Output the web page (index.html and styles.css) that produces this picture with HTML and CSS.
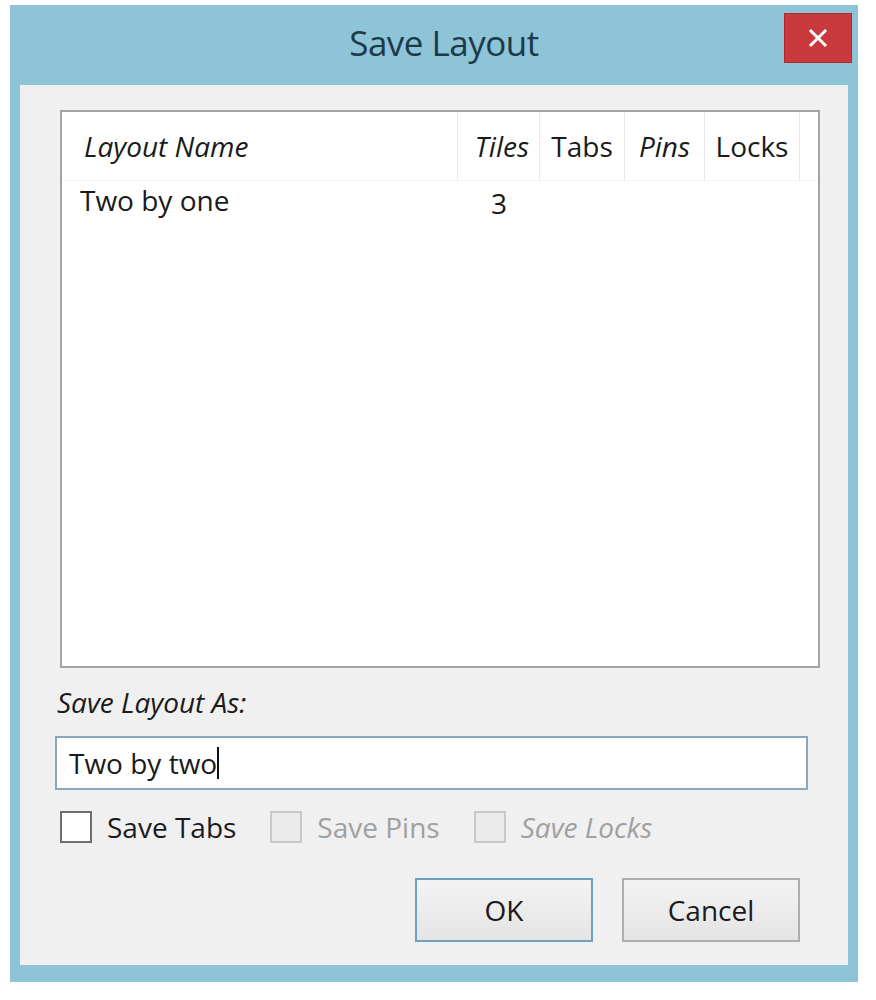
FILE: index.html
```html
<!DOCTYPE html>
<html lang="en">
<head>
    <meta charset="UTF-8">
    <meta name="viewport" content="width=device-width, initial-scale=1.0">
    <link rel="stylesheet" href="styles.css">
    <title>Save Layout</title>
</head>
<body>

    <div class="window">
        <div class="titlebar">
            <span></span>
            <h1 class="title">Save Layout</h1>
            <button class="close" type="button" aria-label="Close">
                <svg width="20" height="20" viewBox="0 0 20 20">
                    <path d="M3 3 L17 17 M17 3 L3 17" stroke="#fff" stroke-width="3" stroke-linecap="square"/>
                </svg>
            </button>
        </div>

        <div class="client">
            <div class="listview">
                <div class="lv-header">
                    <div class="col col-name hd italic">Layout Name</div>
                    <div class="col col-tiles hd italic">Tiles</div>
                    <div class="col col-tabs hd">Tabs</div>
                    <div class="col col-pins hd italic">Pins</div>
                    <div class="col col-locks hd">Locks</div>
                </div>
                <div class="lv-row">
                    <div class="col col-name">Two by one</div>
                    <div class="col col-tiles center">3</div>
                    <div class="col col-tabs"></div>
                    <div class="col col-pins"></div>
                    <div class="col col-locks"></div>
                </div>
            </div>

            <label class="field-label" for="layout-name">Save Layout As:</label>
            <div class="textbox">
                <span id="layout-name">Two by two</span><span class="caret"></span>
            </div>

            <div class="options">
                <label class="check">
                    <span class="box"></span>
                    <span>Save Tabs</span>
                </label>
                <label class="check disabled">
                    <span class="box"></span>
                    <span>Save Pins</span>
                </label>
                <label class="check disabled">
                    <span class="box"></span>
                    <span class="italic">Save Locks</span>
                </label>
            </div>

            <div class="buttons">
                <button class="btn default" type="button">OK</button>
                <button class="btn" type="button">Cancel</button>
            </div>
        </div>
    </div>

</body>
</html>
```

FILE: styles.css
```css
body {
    margin: 0;
    background: #fff;
    font-family: 'Open Sans', 'Noto Sans', sans-serif;
    color: #1a1a1a;
}

.italic {
    font-style: italic;
}

/* cadre de la fenêtre */
.window {
    width: 848px;
    height: 977px;
    margin: 5px 0 0 10px;
    background: #8ec4d8;
    padding: 0 10px 17px 10px;
    box-sizing: border-box;
    display: flex;
    flex-direction: column;
}

.titlebar {
    height: 80px;
    display: grid;
    grid-template-columns: 1fr auto 1fr;
    align-items: start;
}

.title {
    margin: 0 0 0 20px;
    padding-top: 14px;
    font-size: 35px;
    font-weight: 400;
    color: #1d3a48;
    letter-spacing: -0.5px;
}

.close {
    justify-self: end;
    margin-top: 8px;
    margin-right: -4px;
    width: 68px;
    height: 50px;
    border: 1px solid #b02a2c;
    background: #c9393b;
    display: flex;
    align-items: center;
    justify-content: center;
    padding: 0;
}

.client {
    flex: 1;
    background: #f0f0f0;
    padding: 25px 28px 0 40px;
    display: flex;
    flex-direction: column;
}

/* liste */
.listview {
    height: 558px;
    background: #fff;
    border: 2px solid #a5a5a5;
    box-sizing: border-box;
    font-size: 28px;
}

.lv-header,
.lv-row {
    display: flex;
}

.lv-header {
    height: 68px;
    align-items: center;
    border-bottom: 1px solid #f2f2f2;
}

.lv-row {
    height: 38px;
    align-items: center;
}

.col {
    box-sizing: border-box;
    padding: 0 10px;
    white-space: nowrap;
}

.hd {
    height: 100%;
    display: flex;
    align-items: center;
    border-right: 1px solid #e8e8e8;
}

.col-name {
    width: 396px;
    padding-left: 22px;
}

.lv-row .col-name {
    padding-left: 18px;
}

.col-tiles {
    width: 82px;
    justify-content: flex-end;
}

.col-tabs {
    width: 85px;
    justify-content: center;
}

.col-pins {
    width: 80px;
    justify-content: center;
}

.col-locks {
    width: 95px;
    justify-content: center;
}

.center {
    text-align: center;
    padding-top: 6px;
}

/* champ de saisie */
.field-label {
    margin-top: 14px;
    margin-left: -3px;
    font-size: 28px;
    font-style: italic;
    line-height: 40px;
}

.textbox {
    margin-top: 14px;
    margin-left: -5px;
    width: 753px;
    height: 54px;
    box-sizing: border-box;
    border: 2px solid #8aa8bd;
    background: #fff;
    display: flex;
    align-items: center;
    padding-left: 12px;
    font-size: 28px;
}

.caret {
    display: inline-block;
    width: 2px;
    height: 32px;
    background: #111;
}

/* cases à cocher */
.options {
    margin-top: 18px;
    display: flex;
    gap: 34px;
    font-size: 28px;
}

.check {
    display: flex;
    align-items: center;
    gap: 15px;
}

.box {
    width: 32px;
    height: 32px;
    box-sizing: border-box;
    border: 2px solid #6e6e6e;
    background: #fff;
}

.disabled {
    color: #a0a0a0;
}

.disabled .box {
    border-color: #c8c8c8;
    background: #ebebeb;
}

/* boutons */
.buttons {
    margin-top: 32px;
    margin-right: 20px;
    display: flex;
    justify-content: flex-end;
    gap: 29px;
}

.btn {
    width: 178px;
    height: 64px;
    font-family: inherit;
    font-size: 28px;
    font-weight: 500;
    color: #1a1a1a;
    background: linear-gradient(#f3f3f3, #e4e4e4);
    border: 2px solid #adadad;
    padding: 0;
}

.btn.default {
    border-color: #6e9ec2;
}
```
